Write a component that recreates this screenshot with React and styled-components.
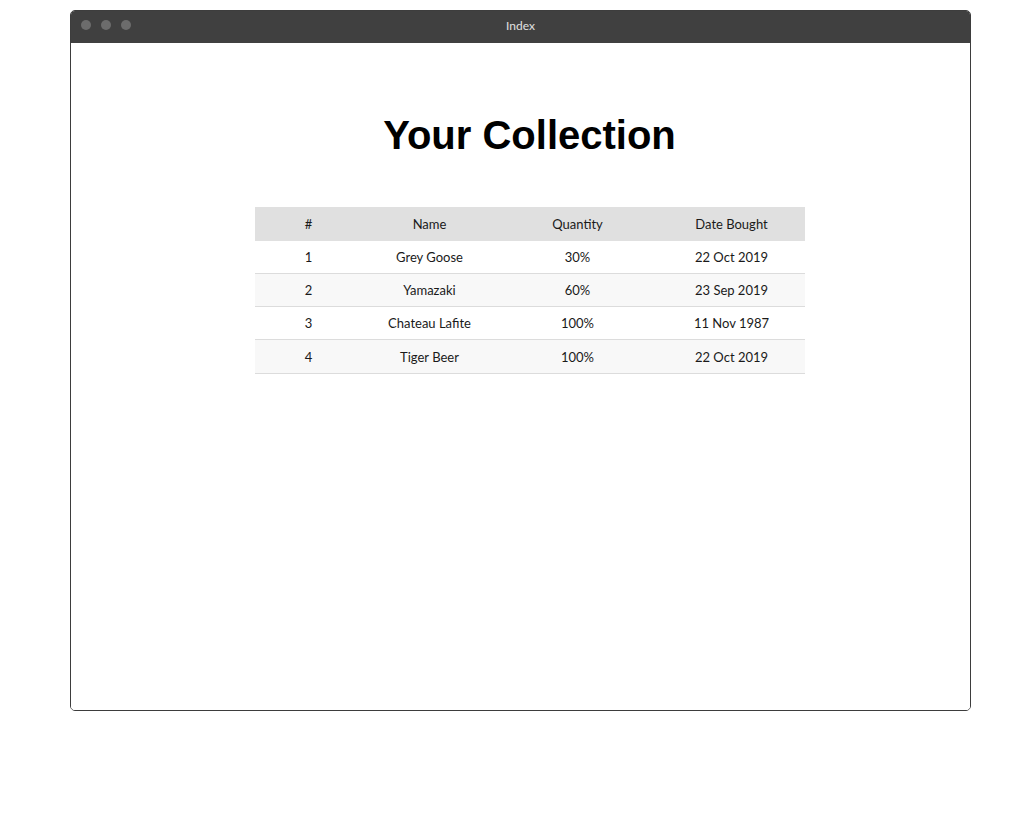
import React from 'react';
import styled, { createGlobalStyle } from 'styled-components';

const GlobalStyle = createGlobalStyle`
  html, body {
    margin: 0;
    padding: 0;
    background: #fff;
  }
`;

const rows = [
  { id: 1, name: 'Grey Goose', quantity: '30%', date: '22 Oct 2019' },
  { id: 2, name: 'Yamazaki', quantity: '60%', date: '23 Sep 2019' },
  { id: 3, name: 'Chateau Lafite', quantity: '100%', date: '11 Nov 1987' },
  { id: 4, name: 'Tiger Beer', quantity: '100%', date: '22 Oct 2019' }
];

const Styled = {
  Page: styled.div`
    padding: 10px 0 0 70px;
    width: 1020px;
    box-sizing: border-box;
  `,
  Window: styled.div`
    width: 901px;
    height: 701px;
    box-sizing: border-box;
    border: 1px solid #3d3d3d;
    border-radius: 5px;
    overflow: hidden;
    display: flex;
    flex-direction: column;
  `,
  TitleBar: styled.div`
    height: 32px;
    flex: none;
    box-sizing: border-box;
    padding-bottom: 3px;
    background: #404040;
    position: relative;
    display: flex;
    align-items: center;
    justify-content: center;
  `,
  Dots: styled.div`
    position: absolute;
    left: 10px;
    top: 9px;
    display: flex;
    gap: 10px;
  `,
  Dot: styled.span`
    width: 10px;
    height: 10px;
    border-radius: 50%;
    background: #6c6c6c;
  `,
  WindowTitle: styled.span`
    font-family: 'Lato', 'Liberation Sans', sans-serif;
    font-size: 12px;
    color: #e0e0e0;
  `,
  Content: styled.div`
    flex: 1;
    background: #fff;
    padding: 0 0 0 18px;
    display: flex;
    flex-direction: column;
    align-items: center;
  `,
  Heading: styled.h1`
    margin: 69px 0 0;
    font-family: 'Liberation Sans', Arial, sans-serif;
    font-weight: bold;
    font-size: 40px;
    line-height: 46px;
    color: #000;
  `,
  Table: styled.table`
    margin-top: 49px;
    width: 550px;
    border-collapse: collapse;
    font-family: 'Lato', 'Noto Sans', sans-serif;
    font-size: 13px;
    color: #1a1a1a;
  `,
  HeadCell: styled.th`
    background: #e0e0e0;
    font-weight: normal;
    height: 33.5px;
    padding: 0;
    text-align: center;
    width: ${props => props.$w}px;
  `,
  Row: styled.tr`
    background: ${props => (props.$even ? '#f8f8f8' : '#fff')};
    border-bottom: 1px solid #dcdcdc;
  `,
  Cell: styled.td`
    height: 32.33px;
    padding: 0;
    text-align: center;
  `
};

const App = () => {
  return (
    <>
      <GlobalStyle />
      <Styled.Page>
        <Styled.Window>
          <Styled.TitleBar>
            <Styled.Dots>
              <Styled.Dot />
              <Styled.Dot />
              <Styled.Dot />
            </Styled.Dots>
            <Styled.WindowTitle>Index</Styled.WindowTitle>
          </Styled.TitleBar>
          <Styled.Content>
            <Styled.Heading>Your Collection</Styled.Heading>
            <Styled.Table>
              <thead>
                <tr>
                  <Styled.HeadCell $w={108}>#</Styled.HeadCell>
                  <Styled.HeadCell $w={134}>Name</Styled.HeadCell>
                  <Styled.HeadCell $w={162}>Quantity</Styled.HeadCell>
                  <Styled.HeadCell $w={146}>Date Bought</Styled.HeadCell>
                </tr>
              </thead>
              <tbody>
                {rows.map((row, i) => (
                  <Styled.Row key={row.id} $even={i % 2 === 1}>
                    <Styled.Cell>{row.id}</Styled.Cell>
                    <Styled.Cell>{row.name}</Styled.Cell>
                    <Styled.Cell>{row.quantity}</Styled.Cell>
                    <Styled.Cell>{row.date}</Styled.Cell>
                  </Styled.Row>
                ))}
              </tbody>
            </Styled.Table>
          </Styled.Content>
        </Styled.Window>
      </Styled.Page>
    </>
  );
};

export default App;
